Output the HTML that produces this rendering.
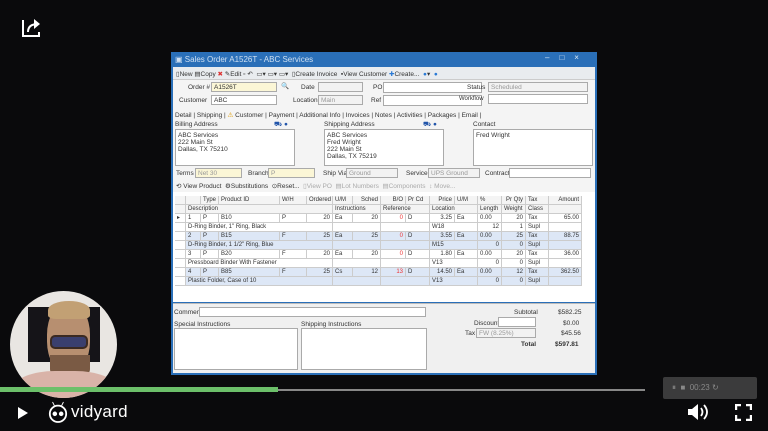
<!DOCTYPE html>
<html><head><style>
*{margin:0;padding:0;box-sizing:border-box}
body{width:768px;height:431px;background:#0a0a0c;position:relative;overflow:hidden;font-family:"Liberation Sans",sans-serif}
.a{position:absolute}
.w{font-size:6.5px;color:#333;white-space:nowrap}
.box{position:absolute;background:#fff;border:1px solid #aaa}
.yel{background:#fbf6d6}
.g{position:absolute;border-right:1px solid #ccc;border-bottom:1px solid #ccc;height:9px;font-size:6px;line-height:8px;padding:0 2px;color:#333;white-space:nowrap;overflow:hidden}
</style></head><body>
<svg class="a" style="left:20px;top:15px" width="24" height="24" viewBox="0 0 24 24" fill="none" stroke="#fff" stroke-width="2"><path d="M3 5v16h16v-4" /><path d="M8 17c0-6 4-8 10-8" /><path d="M14 4l6 5-6 5z" fill="#fff" stroke="none"/></svg>
<div class="a" style="left:171px;top:52px;width:426px;height:323px;background:#2a6fb8;"></div>
<div class="a w" style="left:175px;top:55px;color:#cfe0f2;font-size:8px">▣ Sales Order A1526T - ABC Services</div>
<div class="a w" style="left:545px;top:53px;color:#dbe8f5;font-size:8px;letter-spacing:10px">–□×</div>
<div class="a" style="left:173px;top:67px;width:422px;height:235px;background:#f4f4f4"></div>
<div class="a" style="left:173px;top:67px;width:422px;height:13px;background:#e9ecef;border-bottom:1px solid #ccc"></div>
<div class="a w" style="left:176px;top:70px">▯New ▤Copy <span style="color:#d33">✖</span> ✎Edit ▫ ↶ &nbsp;▭▾ ▭▾ ▭▾ &nbsp;▯Create Invoice &nbsp;▪View Customer <span style="color:#2a7ad5">✚</span>Create... &nbsp;<span style="color:#2a7ad5">●</span>▾ &nbsp;<span style="color:#2a7ad5">●</span></div>
<div class="a w" style="left:188px;top:84px">Order #</div><div class="box yel" style="left:211px;top:82px;width:66px;height:10px"><span class="w" style="position:absolute;left:2px;top:1px">A1526T</span></div>
<div class="a w" style="left:281px;top:82px;color:#557">🔍</div>
<div class="a w" style="left:179px;top:97px">Customer</div><div class="box" style="left:211px;top:95px;width:66px;height:10px"><span class="w" style="position:absolute;left:2px;top:1px">ABC</span></div>
<div class="a w" style="left:301px;top:84px">Date</div><div class="box" style="left:318px;top:82px;width:45px;height:10px;background:#f2f2f2"></div>
<div class="a w" style="left:293px;top:97px">Location</div><div class="box" style="left:318px;top:95px;width:45px;height:10px;background:#f2f2f2"><span class="w" style="position:absolute;left:2px;top:1px;color:#999">Main</span></div>
<div class="a w" style="left:373px;top:84px">PO</div><div class="box" style="left:383px;top:82px;width:99px;height:11px"></div>
<div class="a w" style="left:371px;top:97px">Ref</div><div class="box" style="left:383px;top:95px;width:99px;height:11px"></div>
<div class="a w" style="left:467px;top:84px">Status</div><div class="box" style="left:488px;top:82px;width:100px;height:10px;background:#f2f2f2"><span class="w" style="position:absolute;left:2px;top:1px;color:#999">Scheduled</span></div>
<div class="a w" style="left:459px;top:96px;font-size:6px">Workflow</div><div class="box" style="left:488px;top:94px;width:100px;height:10px"></div>
<div class="a w" style="left:175px;top:111px;font-size:6.5px">Detail | Shipping | <span style="color:#d90">⚠</span> Customer | Payment | Additional Info | Invoices | Notes | Activities | Packages | Email |</div>
<div class="a w" style="left:175px;top:121px">Billing Address</div><div class="a w" style="left:274px;top:120px;color:#25a">⛟ ●</div>
<div class="a w" style="left:324px;top:121px">Shipping Address</div><div class="a w" style="left:423px;top:120px;color:#25a">⛟ ●</div>
<div class="a w" style="left:473px;top:121px">Contact</div>
<div class="box" style="left:175px;top:129px;width:120px;height:37px"><div class="w" style="padding:2px;line-height:7px">ABC Services<br>222 Main St<br>Dallas, TX 75210</div></div>
<div class="box" style="left:324px;top:129px;width:120px;height:37px"><div class="w" style="padding:2px;line-height:7px">ABC Services<br>Fred Wright<br>222 Main St<br>Dallas, TX 75219</div></div>
<div class="box" style="left:473px;top:129px;width:120px;height:37px"><div class="w" style="padding:2px;line-height:7px">Fred Wright</div></div>
<div class="a w" style="left:176px;top:170px">Terms</div><div class="box yel" style="left:195px;top:168px;width:47px;height:10px"><span class="w" style="position:absolute;left:2px;top:1px;color:#999">Net 30</span></div>
<div class="a w" style="left:248px;top:170px">Branch</div><div class="box yel" style="left:268px;top:168px;width:47px;height:10px"><span class="w" style="position:absolute;left:2px;top:1px;color:#999">P</span></div>
<div class="a w" style="left:323px;top:170px">Ship Via</div><div class="box" style="left:346px;top:168px;width:52px;height:10px;background:#f2f2f2"><span class="w" style="position:absolute;left:2px;top:1px;color:#999">Ground</span></div>
<div class="a w" style="left:406px;top:170px">Service</div><div class="box" style="left:428px;top:168px;width:52px;height:10px;background:#f2f2f2"><span class="w" style="position:absolute;left:2px;top:1px;color:#999">UPS Ground</span></div>
<div class="a w" style="left:485px;top:170px">Contract</div><div class="box" style="left:509px;top:168px;width:82px;height:10px"></div>
<div class="a w" style="left:176px;top:182px">⟲ View Product &nbsp;⚙Substitutions &nbsp;⊙Reset... &nbsp;<span style="color:#aaa">▯View PO &nbsp;▤Lot Numbers &nbsp;▤Components &nbsp;↕ Move...</span></div>
<div class="a" style="left:173px;top:192px;width:422px;height:110px;background:#fff"></div>
<div id="grid"></div>
<div class="a" style="left:173px;top:303px;width:422px;height:70px;background:#f0f0f0;border-top:1px solid #bbb"></div>
<div class="a w" style="left:174px;top:309px">Comment</div><div class="box" style="left:199px;top:307px;width:227px;height:10px"></div>
<div class="a w" style="left:174px;top:321px">Special Instructions</div>
<div class="a w" style="left:301px;top:321px">Shipping Instructions</div>
<div class="box" style="left:174px;top:328px;width:124px;height:42px"></div>
<div class="box" style="left:301px;top:328px;width:126px;height:42px"></div>
<div class="a w" style="left:514px;top:309px">Subtotal</div><div class="a w" style="left:558px;top:309px">$582.25</div>
<div class="a w" style="left:474px;top:320px">Discount</div><div class="box" style="left:498px;top:317px;width:38px;height:10px"></div><div class="a w" style="left:563px;top:320px">$0.00</div>
<div class="a w" style="left:465px;top:330px">Tax</div><div class="box" style="left:476px;top:328px;width:60px;height:10px;background:#f2f2f2"><span class="w" style="position:absolute;left:2px;top:1px;color:#999">FW (8.25%)</span></div><div class="a w" style="left:561px;top:330px">$45.56</div>
<div class="a w" style="left:521px;top:341px;font-weight:bold">Total</div><div class="a w" style="left:555px;top:341px;font-weight:bold">$597.81</div>
<div class="a" style="left:10px;top:291px;width:107px;height:107px;border-radius:50%;background:#e9e6e2;overflow:hidden">
<div class="a" style="left:18px;top:16px;width:72px;height:55px;background:#151418"></div>
<div class="a" style="left:37px;top:12px;width:43px;height:70px;border-radius:45%;background:#b78f70"></div>
<div class="a" style="left:38px;top:10px;width:42px;height:18px;border-radius:50% 50% 20% 20%;background:#c2a074"></div>
<div class="a" style="left:40px;top:44px;width:38px;height:14px;border-radius:5px;background:#3a3f6e;border:2px solid #3b2a22"></div>
<div class="a" style="left:40px;top:64px;width:40px;height:24px;border-radius:0 0 40% 40%;background:#7a5a44"></div>
<div class="a" style="left:5px;top:80px;width:100px;height:40px;background:#d9b3a8;border-radius:40% 40% 0 0"></div>
</div>
<div class="a" style="left:0;top:389px;width:645px;height:2px;background:#888"></div>
<div class="a" style="left:0;top:387px;width:278px;height:5px;background:#6cc06a"></div>
<div class="a" style="left:663px;top:377px;width:94px;height:22px;background:rgba(120,120,120,.45);border-radius:2px"></div>
<div class="a w" style="left:672px;top:383px;color:#888;font-size:8px">⏸ &nbsp;■ &nbsp;00:23 ↻</div>
<svg class="a" style="left:17px;top:407px" width="12" height="12"><path d="M1 0L11 6L1 12Z" fill="#fff"/></svg>
<svg class="a" style="left:48px;top:401px" width="20" height="22" viewBox="0 0 22 24"><circle cx="11" cy="14" r="9" fill="none" stroke="#fff" stroke-width="2"/><circle cx="7.5" cy="14" r="2.5" fill="#fff"/><circle cx="14.5" cy="14" r="2.5" fill="#fff"/><path d="M7 5L5 1M15 5L17 1" stroke="#fff"/></svg>
<div class="a" style="left:71px;top:402px;color:#fff;font-size:17px;letter-spacing:.3px">vidyard</div>
<svg class="a" style="left:687px;top:403px" width="24" height="18" viewBox="0 0 24 18"><path d="M1 6h4l6-5v16l-6-5H1z" fill="#fff"/><path d="M14 5q3 4 0 8M17 2q6 7 0 14" stroke="#fff" fill="none" stroke-width="1.8"/></svg>
<svg class="a" style="left:735px;top:404px" width="17" height="17" fill="none" stroke="#fff" stroke-width="2.4"><path d="M1 6V1h5M11 1h5v5M16 11v5h-5M6 16H1v-5"/></svg>
<script>
var cols=[175,186,201,219,280,307,333,353,381,406,430,455,478,502,526,549,582];
var r0=["","","Type","Product ID","W/H","Ordered","U/M","Sched","B/O","Pr Cd","Price","U/M","%","Pr Qty","Tax","Amount"];
var rows=[
["","▸","1","P","B10","P","20","Ea","20","0","D","3.25","Ea","0.00","20","Tax","65.00"],
["","▸","2","P","B15","F","25","Ea","25","0","D","3.55","Ea","0.00","25","Tax","88.75"],
["","","3","P","B20","F","20","Ea","20","0","D","1.80","Ea","0.00","20","Tax","36.00"],
["","","4","P","B85","F","25","Cs","12","13","D","14.50","Ea","0.00","12","Tax","362.50"]];
var desc=[["D-Ring Binder, 1\" Ring, Black","W18","12","1"],["D-Ring Binder, 1 1/2\" Ring, Blue","M15","0","0"],["Pressboard Binder With Fastener","V13","0","0"],["Plastic Folder, Case of 10","V13","0","0"]];
var h="";
function cell(x,y,w,t,bg,al,c){h+='<div class="g" style="left:'+x+'px;top:'+y+'px;width:'+w+'px;background:'+bg+';text-align:'+(al||'left')+';color:'+(c||'#333')+'">'+t+'</div>';}
var y=196;
for(var i=0;i<15;i++)cell(cols[i+1],y,cols[i+2]-cols[i+1],r0[i+1]||"", "#f4f4f4",[5,7,8,10,13,15].indexOf(i+1)>=0?"right":"left");
cell(175,y,11,"","#f4f4f4");
y=205;
var d=[[186,"Description"],[333,"Instructions"],[381,"Reference"],[430,"Location"],[478,"Length"],[502,"Weight"],[526,"Class"],[549,""]];
cell(175,y,11,"","#f4f4f4");
for(var i=0;i<d.length;i++)cell(d[i][0],y,(d[i+1]?d[i+1][0]:582)-d[i][0],d[i][1],"#f4f4f4");
y=214;
for(var r=0;r<4;r++){
 var bg=r%2?"#dde7f6":"#fff";
 cell(175,y,11,r==0?"▸":"","#fff");
 for(var i=0;i<15;i++){var t=rows[r][i+2];var right=[4,6,7,9,12,14].indexOf(i)>=0;cell(cols[i+1],y,cols[i+2]-cols[i+1],t,bg,right?"right":"left",i==7?"#e33":"#333");}
 y+=9;
 cell(175,y,11,"","#fff");
 cell(186,y,147,desc[r][0],bg);cell(333,y,48,"",bg);cell(381,y,49,"",bg);cell(430,y,48,desc[r][1],bg);cell(478,y,24,desc[r][2],bg,"right");cell(502,y,24,desc[r][3],bg,"right");cell(526,y,23,"Supl",bg);cell(549,y,33,"",bg);
 y+=9;
}
document.getElementById("grid").outerHTML=h;
</script>
</body></html>
